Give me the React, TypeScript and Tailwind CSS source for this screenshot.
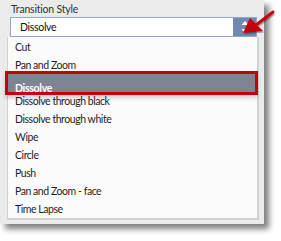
const items = [
  'Cut',
  'Pan and Zoom',
  'Dissolve',
  'Dissolve through black',
  'Dissolve through white',
  'Wipe',
  'Circle',
  'Push',
  'Pan and Zoom - face',
  'Time Lapse',
];

function SelectArrows() {
  return (
    <svg width="10" height="14" viewBox="0 0 10 14" className="block">
      <path d="M5 1 L8.5 5 L1.5 5 Z" fill="#ffffff" />
      <path d="M5 13 L8.5 9 L1.5 9 Z" fill="#ffffff" />
    </svg>
  );
}

function CalloutArrow() {
  return (
    <svg
      width="45"
      height="36"
      viewBox="236 4 45 36"
      className="absolute left-[236px] top-[4px]"
    >
      <g transform="translate(1 1.5)" opacity="0.3">
        <line x1="273" y1="12" x2="256" y2="25" stroke="#000" strokeWidth="3" />
        <path d="M243 33 L250 18 L263 31 Z" fill="#000" />
      </g>
      <line x1="273" y1="12" x2="256" y2="25" stroke="#c8000a" strokeWidth="3" strokeLinecap="round" />
      <path d="M243 33 L250 18 L263 31 Z" fill="#c8000a" />
    </svg>
  );
}

export default function App() {
  return (
    <div
      className="relative w-[281px] h-[241px] overflow-hidden bg-white"
      style={{ fontFamily: 'Lato, "Open Sans", sans-serif' }}
    >
      <div className="w-[264px] h-[224px] bg-[#ebebeb] pt-[2px] shadow-[5px_5px_6px_rgba(0,0,0,0.5)]">
        <div className="pl-[11px] h-[14px] leading-[14px] text-[10.5px] tracking-[-0.2px] text-[#333]">
          Transition Style
        </div>
        <div className="mt-[1px] ml-[10px] w-[247px] h-[20px] flex border border-[#93a6c8] bg-white">
          <div className="flex-1 pl-[9px] text-[10.5px] tracking-[-0.3px] leading-[18px] text-[#111]">Dissolve</div>
          <div className="w-[23px] h-full bg-[#7189b0] flex items-center justify-center">
            <SelectArrows />
          </div>
        </div>
        <div className="ml-[7px] w-[252px] bg-[#fbfbfb] border-l border-r-2 border-b-2 border-[#d2d2d2] pt-[1px]">
          {items.map((item) =>
            item === 'Dissolve' ? (
              <div key={item} className="relative h-[18px] mr-[2px] bg-[#7d8494] text-white font-bold">
                <div className="absolute -left-[3px] -right-[3px] -top-[3px] -bottom-[3px] border-[3px] border-[#c40010] shadow-[0_3px_4px_rgba(0,0,0,0.18)]" />
                <span className="pl-[7px] text-[10.5px] tracking-[-0.3px] leading-[18px]">{item}</span>
              </div>
            ) : (
              <div key={item} className="h-[18px] pl-[7px] text-[10.5px] tracking-[-0.45px] leading-[18px] text-[#1e1e1e]">
                {item}
              </div>
            ),
          )}
        </div>
      </div>
      <CalloutArrow />
    </div>
  );
}
